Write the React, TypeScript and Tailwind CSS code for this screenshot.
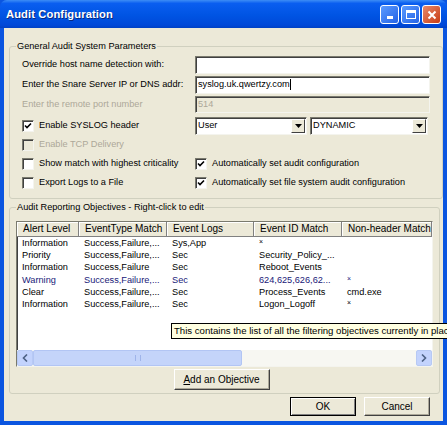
import React from "react";

const sunken =
  "border border-t-[#7a7a6e] border-l-[#7a7a6e] border-r-[#f4f4ee] border-b-[#f4f4ee] shadow-[inset_1px_1px_0_#404040]";

function Check({ on, off }: { on?: boolean; off?: boolean }) {
  return (
    <span
      className={`w-[12px] h-[12px] shrink-0 flex items-center justify-center ${sunken} ${
        off ? "bg-[#ECE9D8]" : "bg-white"
      }`}
    >
      {on && (
        <svg width="8" height="8" viewBox="0 0 8 8">
          <path d="M1 3.5 L3 5.5 L7 1.5" stroke="#000" strokeWidth="1.6" fill="none" />
        </svg>
      )}
    </span>
  );
}

function Combo({ value, w }: { value: string; w: string }) {
  return (
    <div className={`${w} h-[18px] flex items-center bg-white ${sunken}`}>
      <span className="flex-1 pl-[2px]">{value}</span>
      <span className="w-[14px] h-[14px] mr-[1px] bg-[#ECE9D8] border border-t-white border-l-white border-r-[#404040] border-b-[#404040] flex items-center justify-center">
        <svg width="7" height="4" viewBox="0 0 7 4">
          <path d="M0 0 H7 L3.5 4 Z" fill="#000" />
        </svg>
      </span>
    </div>
  );
}

const rows = [
  ["Information", "Success,Failure,...", "Sys,App", "*", ""],
  ["Priority", "Success,Failure,...", "Sec", "Security_Policy_...", ""],
  ["Information", "Success,Failure", "Sec", "Reboot_Events", ""],
  ["Warning", "Success,Failure,...", "Sec", "624,625,626,62...", "*"],
  ["Clear", "Success,Failure,...", "Sec", "Process_Events", "cmd.exe"],
  ["Information", "Success,Failure,...", "Sec", "Logon_Logoff", "*"],
];

const cols = [
  ["Alert Level", "w-[62px]"],
  ["EventType Match", "w-[88px]"],
  ["Event Logs", "w-[87px]"],
  ["Event ID Match", "w-[88px]"],
  ["Non-header Match", "w-[90px]"],
];

export default function App() {
  return (
    <div
      className="relative w-[447px] h-[425px] flex flex-col bg-[#0B55E0] text-[9.2px] text-black overflow-hidden"
      style={{ fontFamily: '"Liberation Sans", Arial, sans-serif' }}
    >
      {/* title bar */}
      <div className="h-[28px] shrink-0 flex items-center px-[6px] rounded-t-[7px] bg-[linear-gradient(to_bottom,#3d8df5_0%,#0a5ef0_12%,#0054e3_55%,#0048d8_90%,#0041c4_100%)]">
        <span className="flex-1 text-white font-bold text-[11.2px] tracking-[0.1px] [text-shadow:1px_1px_0_#0a2a80]">
          Audit Configuration
        </span>
        <div className="flex gap-[2px] mt-[1px]">
          <span className="w-[19px] h-[19px] rounded-[3px] border border-white bg-[linear-gradient(135deg,#5b9bff,#2463e6)] flex items-end justify-center pb-[4px]">
            <span className="w-[6px] h-[3px] bg-white" />
          </span>
          <span className="w-[19px] h-[19px] rounded-[3px] border border-white bg-[linear-gradient(135deg,#5b9bff,#2463e6)] flex items-center justify-center">
            <span className="w-[10px] h-[9px] border border-white border-t-[3px]" />
          </span>
          <span className="w-[19px] h-[19px] rounded-[3px] border border-white bg-[linear-gradient(135deg,#e8896a,#c83c14)] flex items-center justify-center">
            <svg width="10" height="10" viewBox="0 0 10 10">
              <path d="M1.5 1.5 L8.5 8.5 M8.5 1.5 L1.5 8.5" stroke="#fff" strokeWidth="2" />
            </svg>
          </span>
        </div>
      </div>

      {/* body */}
      <div className="flex-1 mx-[4px] mb-[4px] bg-[#ECE9D8] flex flex-col px-[5px] pr-[6px]">
        <fieldset className="mt-[12px] border border-[#D0D0BF] rounded-[3px] px-[12px] pb-[5px]">
          <legend className="ml-[-6px] px-[1px] text-[#000]">General Audit System Parameters</legend>
          <div className="flex flex-col">
            <div className="h-[20px] mt-[1px] flex items-center">
              <span className="w-[173px]">Override host name detection with:</span>
              <div className={`w-[235px] h-[18px] bg-white ${sunken}`} />
            </div>
            <div className="h-[20px] flex items-center">
              <span className="w-[173px]">Enter the Snare Server IP or DNS addr:</span>
              <div className={`w-[235px] h-[18px] bg-white flex items-center pl-[2px] ${sunken}`}>
                syslog.uk.qwertzy.com<span className="w-[1px] h-[11px] bg-black" />
              </div>
            </div>
            <div className="h-[20px] flex items-center">
              <span className="w-[173px] text-[#ACA899]">Enter the remote port number</span>
              <div className={`w-[235px] h-[17px] bg-[#ECE9D8] text-[#ACA899] flex items-center pl-[2px] ${sunken}`}>
                514
              </div>
            </div>
            <div className="h-[20px] mt-[1px] flex items-center">
              <label className="w-[173px] flex items-center gap-[4px]">
                <Check on />
                <span className="pl-[1px]">Enable SYSLOG header</span>
              </label>
              <Combo value="User" w="w-[112px]" />
              <span className="w-[3px]" />
              <Combo value="DYNAMIC" w="w-[118px]" />
            </div>
            <div className="h-[19px] flex items-center gap-[4px] text-[#ACA899]">
              <Check off />
              <span className="pl-[1px]">Enable TCP Delivery</span>
            </div>
            <div className="h-[19px] flex items-center">
              <label className="w-[173px] flex items-center gap-[4px]">
                <Check />
                <span className="pl-[1px]">Show match with highest criticality</span>
              </label>
              <label className="flex items-center gap-[4px]">
                <Check on />
                <span className="pl-[1px]">Automatically set audit configuration</span>
              </label>
            </div>
            <div className="h-[19px] flex items-center">
              <label className="w-[173px] flex items-center gap-[4px]">
                <Check />
                <span className="pl-[1px]">Export Logs to a File</span>
              </label>
              <label className="flex items-center gap-[4px]">
                <Check on />
                <span className="pl-[1px]">Automatically set file system audit configuration</span>
              </label>
            </div>
          </div>
        </fieldset>

        <fieldset className="mt-[2px] border border-[#D0D0BF] rounded-[3px] px-[6px] pb-[3px]">
          <legend className="ml-[0px] px-[1px]">Audit Reporting Objectives - Right-click to edit</legend>
          <div className={`mt-[6px] h-[146px] bg-white flex flex-col overflow-hidden ${sunken}`}>
            <div className="flex h-[15px] shrink-0 bg-[#ECE9D8] border-b border-[#808080] whitespace-nowrap">
              {cols.map(([c, w]) => (
                <div
                  key={c}
                  className={`${w} shrink-0 pl-[6px] flex items-center overflow-hidden border-r border-[#808080] shadow-[inset_1px_1px_0_#fff] text-[10px]`}
                >
                  {c}
                </div>
              ))}
            </div>
            <div className="flex-1 pt-[1px]">
              {rows.map((r, i) => (
                <div
                  key={i}
                  className={`flex h-[12.3px] items-center whitespace-nowrap ${
                    r[0] === "Warning" ? "text-[#202078]" : ""
                  }`}
                >
                  {r.map((c, j) => (
                    <div key={j} className={`${cols[j][1]} shrink-0 pl-[5px] overflow-hidden`}>
                      {c === "*" ? <span className="text-[7px] align-top">×</span> : c}
                    </div>
                  ))}
                </div>
              ))}
            </div>
            <div className="h-[16px] shrink-0 flex bg-[#F7F7F2]">
              <span className="w-[16px] h-[16px] rounded-[2px] bg-[#C3D3FD] border border-[#B7C9F4] flex items-center justify-center">
                <svg width="6" height="8" viewBox="0 0 6 8">
                  <path d="M5 0.5 L1.5 4 L5 7.5" stroke="#4D6185" strokeWidth="1.6" fill="none" />
                </svg>
              </span>
              <span className="w-[209px] h-[16px] rounded-[2px] bg-[#C4D4FA] border border-[#B2C5F4] flex items-center justify-center">
                <span className="w-[6px] h-[6px] border-x border-[#9FB4EA]" />
              </span>
              <span className="flex-1" />
              <span className="w-[16px] h-[16px] rounded-[2px] bg-[#C3D3FD] border border-[#B7C9F4] flex items-center justify-center">
                <svg width="6" height="8" viewBox="0 0 6 8">
                  <path d="M1 0.5 L4.5 4 L1 7.5" stroke="#4D6185" strokeWidth="1.6" fill="none" />
                </svg>
              </span>
            </div>
          </div>
          <div className="flex justify-center mt-[2px] pr-[6px]">
            <button className="w-[96px] h-[21px] bg-[#ECE9D8] border border-t-white border-l-white border-r-[#404040] border-b-[#404040] shadow-[inset_-1px_-1px_0_#ACA899] text-[10px]">
              <span className="underline">A</span>dd an Objective
            </button>
          </div>
        </fieldset>

        <div className="flex justify-end gap-[8px] mt-[3px] pr-[7px]">
          <button className="w-[66px] h-[19px] bg-[#ECE9D8] border border-black shadow-[inset_1px_1px_0_#fff,inset_-1px_-1px_0_#808080] text-[10px]">
            OK
          </button>
          <button className="w-[66px] h-[19px] bg-[#ECE9D8] border border-t-white border-l-white border-r-[#404040] border-b-[#404040] shadow-[inset_-1px_-1px_0_#ACA899] text-[10px]">
            Cancel
          </button>
        </div>
      </div>

      {/* tooltip */}
      <div className="absolute left-[171px] top-[323px] h-[16px] pl-[2px] pr-[10px] bg-[#FFFFE1] border border-black flex items-center whitespace-nowrap text-[9.6px]">
        This contains the list of all the filtering objectives currently in place
      </div>
    </div>
  );
}
